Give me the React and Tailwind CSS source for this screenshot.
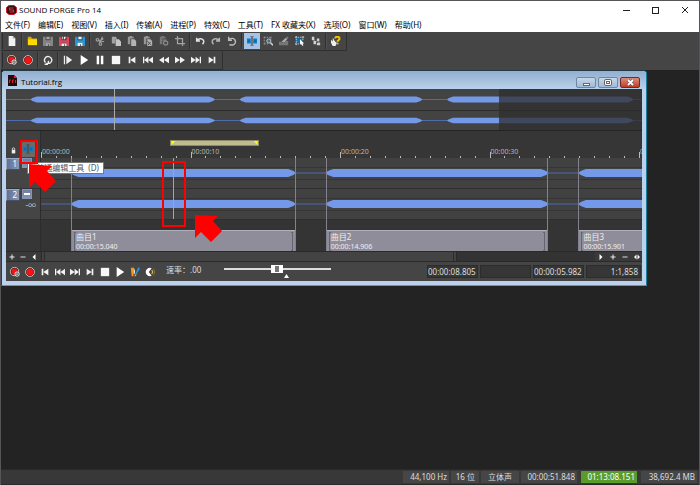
import React from 'react';

const VIEW_SECONDS = 40.2;
const TOTAL_SECONDS = 51.848;
const CURSOR = 8.805;
const SELECTION = { start: 8.6, length: 5.982 };

const regions = [
    { name: '曲目1', start: 2, length: 15.04, label: '00:00:15.040' },
    { name: '曲目2', start: 19.04, length: 14.906, label: '00:00:14.906' },
    { name: '曲目3', start: 35.95, length: 15.2, label: '00:00:15.901' },
];

const menus = ['文件(F)', '编辑(E)', '视图(V)', '插入(I)', '传输(A)', '进程(P)', '特效(C)', '工具(T)', 'FX 收藏夹(X)', '选项(O)', '窗口(W)', '帮助(H)'];

const viewPct = (s) => `${(s / VIEW_SECONDS) * 100}%`;
const totalPct = (s) => `${(s / TOTAL_SECONDS) * 100}%`;

const clipboard = <path d="M1 1h2V0h3v1h2v2H4v7H1z" />;

// All glyphs are drawn on a 12 x 12 grid
const glyphs = {
    new: <><path fill="#f2f2f2" d="M2 0h5l3 3v9H2z" /><path fill="#a8a8a8" d="M7 0v3h3z" /></>,
    open: <><path fill="#d8a900" d="M1 1h4l1 2h6v2H1z" /><path fill="#ffd900" d="M1 4h11v7H1z" /></>,
    save: <><path fill="#858585" d="M0 1h3v4h6V1h3v11H9V8H3v4H0z" /><path fill="#a2a2a2" d="M3 8h6v4H7v-2H6v2H3zM4 1h4v3H4z" /></>,
    saveAs: <><path fill="#e0455a" d="M0 1h3v4h6V1h3v11H9V8H3v4H0z" /><path fill="#eee" d="M3 9h6v3H7v-2H6v2H3zM4 1h1v3H4zM6 1h2v1l-1 2H6z" /></>,
    saveAll: <><path fill="#2496dc" d="M0 1h3v4h6V1h3v11H9V8H3v4H0z" /><path fill="#eee" d="M3 8h6v4H7v-2H6v2H3zM4 1h4v3H4z" /></>,
    cut: (
        <g fill="none" stroke="#a2a2a2" strokeWidth="1.3">
            <circle cx="3" cy="4.5" r="1.6" /><circle cx="6.5" cy="9.5" r="1.6" />
            <path d="M4 5.5 11 7M5.5 8 9 1M10 3 5 7" />
        </g>
    ),
    copy: <><path fill="#a2a2a2" d="M1 1h5l1 2v1H5v5H1z" /><path fill="#c4c4c4" d="M5.500 4h4L12 6.500V12H5.500z" /></>,
    paste: <g fill="#969696">{clipboard}<path fill="#b4b4b4" d="M5 4h4l2 2v6H5z" /></g>,
    pasteMix: <g fill="#969696">{clipboard}<path fill="#b4b4b4" d="M5 4h4l2 2v6H5z" /><path stroke="#454545" fill="none" d="m5 6 5 5M9 7l-3 4" /></g>,
    pasteNew: <g fill="#777">{clipboard}<path d="M4 4h5v2H4z" /><circle cx="8" cy="8.500" r="2.500" fill="none" stroke="#8a8a8a" strokeWidth="1.500" /></g>,
    trim: <path fill="none" stroke="#a2a2a2" strokeWidth="1.500" d="M3 0v9h9M0 3h9v9" />,
    undo: <path fill="none" stroke="#e4e4e4" strokeWidth="1.800" d="M2 2v4h4M2 6c2-3 6-4 8-1 1 2 0 4-1 5" />,
    redo: <path fill="none" stroke="#b4b4b4" strokeWidth="1.800" d="M10 2v4H6M10 6C8 3 4 2 2 5c-1 2 0 4 1 5" />,
    repeat: <path fill="none" stroke="#bcbcbc" strokeWidth="1.700" d="M2 1v4h4M2 5c2-3 7-3 8 1 1 4-4 6-7 4" />,
    edit: (
        <>
            <path fill="#0a7cc8" d="M0 3h4.500v6H0zM7.500 3H12v6H7.500z" />
            <path fill="#14608f" d="M1.500 5h2v2h-2zM8.500 5h2v2h-2z" />
            <path fill="none" stroke="#444" strokeWidth=".8" d="M4 .5h1.300v11H4M8 .5H6.700v11H8" />
        </>
    ),
    magnify: (
        <>
            <path fill="none" stroke="#bbb" strokeDasharray="1 1" d="M1 1.500h9M1.500 1v9M1 9.500h5M9.500 1v3" />
            <circle cx="7" cy="6" r="2.500" fill="#3e6f92" stroke="#d6d6d6" /><path stroke="#ddd" strokeWidth="1.600" d="m9 8 3 3" />
        </>
    ),
    pencil: <><path fill="#777" d="M0 7h3v4H0zM3 8h3v3H3zM8 6h3v5H6V9z" /><path fill="#a8a8a8" d="m3 7 5-5 2 2-4 4z" /><path fill="#888" d="M9 1h2v2H9z" /></>,
    event: (
        <>
            <path fill="#0873b9" d="M1 3h8v5H1z" />
            <path fill="none" stroke="#ddd" strokeDasharray="2 1" d="M0 1.500h11M0 9.500h8M1.500 0v11M9.500 0v5" />
            <path fill="#fff" d="m6 4 5 5H9l1 2-1 1-2-3-1 1z" />
        </>
    ),
    envelope: (
        <>
            <path fill="none" stroke="#aaa" d="m3 3 2 5M5 8l4-3M9 5l1 5" />
            <path fill="#d0d0d0" d="M1 1h3v4H1zM3 6h3v4H3zM7 3h3v3H7zM7 8h4v3H7z" />
        </>
    ),
    help: (
        <>
            <path fill="none" stroke="#f1c400" strokeWidth="2.400" d="M5 3c0-3 6-3 5 1L8 6v1" /><path fill="#f1c400" d="M7 8h2v2H7z" />
            <path fill="#eee" d="M0 5h1l1 2V3h1l1 3 1-1v2l2 1-1 3-1 1H2L0 8z" />
        </>
    ),
    armRecord: (
        <>
            <circle cx="5.500" cy="5.500" r="4.900" fill="#3a1515" stroke="#ddd" /><circle cx="5.500" cy="5.500" r="3.700" fill="#f81313" />
            <circle cx="8.500" cy="8.500" r="2.600" fill="#454545" stroke="#fff" /><path stroke="#fff" d="M7 8.500h3" />
        </>
    ),
    record: <><circle cx="6" cy="6" r="5.300" fill="#3a1515" stroke="#ddd" /><circle cx="6" cy="6" r="4.200" fill="#f81313" /></>,
    loop: <path fill="none" stroke="#eee" strokeWidth="1.700" d="M3 9C0 6 3 1 7 2s5 6 1 8H4M6.500 7v3.500M2 11h4" />,
    playAll: <path fill="#eee" d="M1 1h1.500v10H1zM4 1l7 5-7 5z" />,
    play: <path fill="#fff" d="m2 0 9 6-9 6z" />,
    pause: <path fill="#fff" d="M2 1h3v10H2zM7 1h3v10H7z" />,
    stop: <path fill="#f6f6f6" d="M1 1h10v10H1z" />,
    toStart: <path fill="#f2f2f2" d="M2 2h2v8H2zM10 2v8L4 6z" />,
    prev: <path fill="#f2f2f2" d="M0 2h1.500v8H0zM6.500 2v8l-5-4zM12 2v8L6.500 6z" />,
    rewind: <path fill="#f2f2f2" d="M6 2v8L0 6zM12 2v8L6 6z" />,
    forward: <path fill="#f2f2f2" d="M0 2v8l6-4zM6 2v8l6-4z" />,
    next: <path fill="#f2f2f2" d="M10.500 2H12v8h-1.500zM5.500 2v8l5-4zM0 2v8l5.500-4z" />,
    toEnd: <path fill="#f2f2f2" d="M8 2h2v8H8zM2 2v8l6-4z" />,
    brush: <><path fill="#f59a1b" d="M1 1h4v4l-1 6H2z" /><path fill="#fff" d="M5 3h1v5H5z" /><path fill="#2596e0" d="m10 0 2 2-4 6-2 1z" /><path fill="#f59a1b" d="m6 9 2-1-1 3H5z" /></>,
    scrub: <><path fill="#fff" d="M8 1.500A5 5 0 1 0 8 10.500L4.500 6z" /><path fill="none" stroke="#e2bd3c" strokeWidth="1.500" d="M8 4c1.500 1 1.500 3 0 4" /><path fill="none" stroke="#8d7a3c" d="M10 2c2 2 2 6 0 8" /></>,
    lock: <><path fill="#eee" d="M3 5h6v6H3z" /><path fill="none" stroke="#eee" strokeWidth="1.500" d="M4 5V3c0-2 4-2 4 0v2" /></>,
    plus: <path fill="#eee" d="M5 1h2v4h4v2H7v4H5V7H1V5h4z" />,
    minus: <path fill="#ddd" d="M1 5h10v2H1z" />,
    left: <path fill="#fff" d="M9 0v12L3 6z" />,
    right: <path fill="#fff" d="M3 0v12l6-6z" />,
    both: <path fill="#fff" d="M5 1v10L0 6zM7 1v10l5-5z" />,
};

const Icon = ({ name, className = 'h-2.5 w-2.5' }) => (
    <svg viewBox="0 0 12 12" className={`shrink-0 ${className}`} aria-hidden="true">{glyphs[name]}</svg>
);

const ToolButton = ({ name, active }) => (
    <button
        aria-label={name}
        className={`flex h-4 w-4 shrink-0 items-center justify-center ${active ? 'bg-[#a5c3e6]' : ''}`}
    >
        <Icon name={name} />
    </button>
);

const Divider = () => <span className="mx-px h-4 w-0.5 shrink-0 border-l border-[#2f2f2f] bg-[#505050]" />;

const Toolbar = ({ groups, active, label }) => (
    <div role="toolbar" aria-label={label} className="flex h-[19px] w-fit items-center border-r border-b border-[#303030] pr-0.5">
        <span className="ml-px mr-px h-4 w-px bg-[#2c2c2c]" />
        {groups.map((group, i) => (
            <React.Fragment key={group[0]}>
                {i > 0 && <Divider />}
                {group.map((name) => <ToolButton key={name} name={name} active={name === active} />)}
            </React.Fragment>
        ))}
    </div>
);

// Waveform as tapered blue blocks joined by the silence line
const Wave = ({ seconds, thickness: t }) => (
    <svg
        viewBox={`0 0 ${seconds * 100} 20`}
        preserveAspectRatio="none"
        className="absolute inset-x-0 top-0 h-full w-full"
        aria-hidden="true"
    >
        <path d={`M0 10H${seconds * 100}`} stroke="#4d6ca8" strokeWidth="1" vectorEffect="non-scaling-stroke" />
        {regions.map(({ start, length }) => {
            const a = start * 100;
            const b = (start + length) * 100;
            return (
                <path
                    key={start}
                    fill="#7499e8"
                    d={`M${a} 10L${a + 15} ${10 - t * 0.5}L${a + 50} ${10 - t}H${b - 50}L${b - 15} ${10 - t * 0.5}L${b} 10L${b - 15} ${10 + t * 0.5}L${b - 50} ${10 + t}H${a + 50}L${a + 15} ${10 + t * 0.5}Z`}
                />
            );
        })}
    </svg>
);

const Overview = () => (
    <div className="relative border-b border-[#242424] bg-[#434343]">
        <div className="relative h-[22px] border-b border-[#2b2b2b]"><Wave seconds={TOTAL_SECONDS} thickness={2.8} /></div>
        <div className="relative h-[19px]"><Wave seconds={TOTAL_SECONDS} thickness={2.8} /></div>
        <div className="absolute inset-y-0 right-0 bg-[#2d2d2d]/75" style={{ left: totalPct(VIEW_SECONDS) }} />
        <div className="absolute inset-y-0 w-px bg-[#aaa]" style={{ left: totalPct(CURSOR) }} />
    </div>
);

const Ruler = () => (
    <div className="relative h-[27px] flex-1 overflow-hidden bg-[#363636] text-[7px] leading-none text-[#b5b5b5]">
        <div
            className="absolute top-[9px] flex h-[6px] justify-between border border-[#8d8a68] bg-[#bfbb91]"
            style={{ left: viewPct(SELECTION.start), width: viewPct(SELECTION.length) }}
        >
            <svg viewBox="0 0 5 5" className="h-full w-[5px]"><path fill="#ff0" d="M0 0h5L0 5z" /></svg>
            <svg viewBox="0 0 5 5" className="h-full w-[5px]"><path fill="#ff0" d="M0 0h5v5z" /></svg>
        </div>
        {Array.from({ length: 41 }, (_, s) => (
            <span
                key={s}
                className={`absolute bottom-0 w-px bg-[#bbb] ${s % 10 === 0 ? 'h-[6px]' : 'h-0.5'}`}
                style={{ left: viewPct(s) }}
            />
        ))}
        {[0, 10, 20, 30, 40].map((s) => (
            <span key={s} className="absolute bottom-[3px] pl-px" style={{ left: viewPct(s) }}>
                {`00:00:${String(s).padStart(2, '0')}`}
            </span>
        ))}
    </div>
);

const TrackHead = ({ number, gain }) => (
    <div className="h-[31px] border-b border-[#333] bg-[#454545]">
        <div className="flex items-start gap-0.5">
            <span className="h-3 w-3.5 border border-[#9aa8c8] border-r-[#46506a] border-b-[#46506a] bg-linear-to-r from-[#5f7098] to-[#8b98b5] pr-0.5 text-right text-[8px] leading-[10px] text-white">
                {number}
            </span>
            <button aria-label={`track ${number}`} className="h-2.5 w-2.5 border border-[#8795b5] bg-linear-to-b from-[#6e7da1] to-[#8593b3] p-px">
                <span className="block h-0.5 bg-white" />
            </button>
        </div>
        <p className="pr-1 text-right text-[8px] leading-[8px] text-[#c8c8c8]">{gain}</p>
    </div>
);

const Track = () => (
    <div className="relative h-[31px] border-b border-[#2f2f2f] bg-[#414141]">
        <div className="absolute inset-x-0 top-[9px] h-[13px] border-y border-[#353535]" />
        <Wave seconds={VIEW_SECONDS} thickness={2.7} />
    </div>
);

const Timeline = () => (
    <div className="flex">
        <div className="w-[35px] shrink-0 border-r border-[#2c2c2c] bg-[#363636]">
            <TrackHead number={1} />
            <TrackHead number={2} gain="-∞" />
        </div>
        <div className="relative min-w-0 flex-1 overflow-hidden bg-[#343434]">
            <Track />
            <Track />
            <div className="h-[31px]" />
            {regions.map(({ name, start, length, label }) => (
                <div
                    key={name}
                    className="absolute inset-y-0 flex items-end border-x border-[#83818e]"
                    style={{ left: viewPct(start), width: viewPct(length) }}
                >
                    <div className="flex h-[21px] w-full justify-between border-t border-[#b0aeb8] bg-[#908d9b] px-0.5 pt-px text-[#eee]">
                        <span className="w-0.5 border-y border-l border-[#66646f]" />
                        <span className="flex-1">
                            <span className="block text-[8px] leading-[10px]">{name}</span>
                            <span className="block text-[7px] leading-[10px]">{label}</span>
                        </span>
                        <span className="w-0.5 border-y border-r border-[#66646f]" />
                    </div>
                </div>
            ))}
            <div className="absolute top-0 h-[61px] w-px bg-[#a5a5a5]" style={{ left: viewPct(CURSOR) }} />
        </div>
    </div>
);

const ScrollRow = () => (
    <div className="flex h-[11px] items-center border-y border-[#2a2a2a] bg-[#3a3a3a]">
        {['plus', 'minus', 'left'].map((n) => (
            <button key={n} aria-label={n} className="flex w-[11px] justify-center"><Icon name={n} className="h-1.5 w-1.5" /></button>
        ))}
        <div className="ml-0.5 h-full flex-1 bg-[#333]">
            <div className="flex h-full w-3/4 justify-between border-x border-[#2a2a2a] bg-[#434343] px-0.5">
                <span className="w-px bg-[#2c2c2c]" />
                <span className="w-px bg-[#2c2c2c]" />
            </div>
        </div>
        <div className="flex gap-px">
            {['right', 'plus', 'minus', 'both'].map((n) => (
                <button key={n} aria-label={n} className="flex w-[11px] justify-center"><Icon name={n} className="h-1.5 w-1.5" /></button>
            ))}
        </div>
    </div>
);

const Field = ({ children, className = '' }) => (
    <span className={`h-[13px] border border-[#2c2c2c] bg-[#363636] pr-0.5 text-right text-[8px] leading-[11px] text-[#ddd] ${className}`}>
        {children}
    </span>
);

const Transport = () => (
    <div className="flex h-[19px] items-center bg-[#454545] pr-px">
        <div className="flex pl-px">
            {['armRecord', 'record', 'toStart', 'prev', 'next', 'toEnd', 'stop', 'play', 'brush', 'scrub'].map((n) => (
                <button key={n} aria-label={n} className="flex w-[15px] justify-center"><Icon name={n} /></button>
            ))}
        </div>
        <label htmlFor="rate" className="ml-[9px] w-[58px] pb-1 text-[8px] leading-3 text-[#ddd]">速率：.00</label>
        <div className="flex h-full w-[107px] flex-col items-center pt-0.5">
            <input
                id="rate"
                type="range"
                defaultValue="49"
                className="h-[10px] w-full appearance-none bg-transparent [&::-webkit-slider-runnable-track]:h-0.5 [&::-webkit-slider-runnable-track]:bg-[#ddd] [&::-webkit-slider-thumb]:-mt-[3px] [&::-webkit-slider-thumb]:h-2 [&::-webkit-slider-thumb]:w-3 [&::-webkit-slider-thumb]:appearance-none [&::-webkit-slider-thumb]:border-x-4 [&::-webkit-slider-thumb]:border-y [&::-webkit-slider-thumb]:border-white [&::-webkit-slider-thumb]:bg-[#777]"
            />
            <svg viewBox="0 0 5 4" className="ml-[18px] h-1 w-[5px]"><path fill="#fff" d="M2.500 0 5 4H0z" /></svg>
        </div>
        <div className="ml-auto flex gap-0.5">
            <Field className="w-[51px]">00:00:08.805</Field>
            <Field className="w-[51px]" />
            <Field className="w-[51px]">00:00:05.982</Field>
            <Field className="w-[55px]">1:1,858</Field>
        </div>
    </div>
);

const Annotations = () => (
    <>
        <div className="absolute left-[25px] top-[91px] flex h-3 w-[77px] items-center justify-end border border-[#777] bg-white pr-1 text-[8px] leading-none text-[#555]">
            <span role="tooltip">普通编辑工具&nbsp; (D)</span>
        </div>
        <div className="absolute left-[18px] top-[69px] h-6 w-[18px] border-2 border-[#f00]" />
        <div className="absolute left-[160px] top-[90px] h-[66px] w-6 border-2 border-[#f00]" />
        <svg viewBox="0 0 28 28" className="absolute left-[27px] top-[93px] h-7 w-7"><path fill="#f00" d="M0 0 23 2 18 7 27 17 16 28 6 18 0 24z" /></svg>
        <svg viewBox="0 0 28 28" className="absolute left-[193px] top-36 h-7 w-7"><path fill="#f00" d="M0 0 23 1 18 6 27 16 16 27 6 17 0 23z" /></svg>
    </>
);

const DocumentWindow = () => (
    <section className="relative mr-[52px] rounded-t border border-[#243b48] border-b-[#16b7d4] border-r-[#167f99] bg-[#bcd2ec] px-1 pb-1">
        <header className="-mx-1 flex h-[18px] items-center rounded-t bg-linear-to-b from-[#93afcf] to-[#b8d1ec] pl-1.5 pr-1.5">
            <svg viewBox="0 0 9 11" className="h-[11px] w-[9px]">
                <path fill="#25090c" d="M0 0h6l3 3v8H0z" />
                <path fill="none" stroke="#e0202c" d="M1.500 8V5H3M4.500 8V5H6M7.500 5v3" /><path fill="#e0202c" d="M6 0v3h3z" />
            </svg>
            <h2 className="ml-1 mt-1 font-['Open_Sans','Noto_Sans',sans-serif] text-[8px] leading-none text-black">Tutorial.frg</h2>
            <div className="ml-auto mt-1 flex gap-0.5">
                <button aria-label="minimize" className="flex h-[11px] w-5 items-center justify-center rounded-xs border border-[#7087a3] bg-linear-to-b from-[#c6d7e9] to-[#a0bad6]">
                    <span className="mt-1 h-[3px] w-[7px] border border-[#666] bg-white" />
                </button>
                <button aria-label="restore" className="flex h-[11px] w-5 items-center justify-center rounded-xs border border-[#7087a3] bg-linear-to-b from-[#c6d7e9] to-[#a0bad6]">
                    <span className="h-[7px] w-2 rounded-xs border border-[#666] bg-white p-px"><span className="block h-[3px] border border-[#667]" /></span>
                </button>
                <button aria-label="close" className="flex h-[11px] w-5 items-center justify-center rounded-xs border border-[#6d2a2a] bg-linear-to-b from-[#d88b7d] to-[#c23b22]">
                    <svg viewBox="0 0 7 7" className="h-[7px] w-[7px]"><path stroke="#555" strokeWidth="3" d="m1 1 5 5M6 1 1 6" /><path stroke="#fff" strokeWidth="1.800" d="m1 1 5 5M6 1 1 6" /></svg>
                </button>
            </div>
        </header>
        <Overview />
        <div className="flex">
            <div className="flex w-[35px] shrink-0 items-end justify-between border-r border-[#2c2c2c] bg-[#404040] pl-1 pr-1">
                <Icon name="lock" className="mb-1 h-[7px] w-[7px]" />
                <button aria-label="edit tool" className="mb-px mr-px flex h-4 w-[14px] items-center justify-center bg-[#6a6a6a]">
                    <Icon name="edit" />
                </button>
            </div>
            <Ruler />
        </div>
        <Timeline />
        <ScrollRow />
        <Transport />
        <Annotations />
    </section>
);

const StatusBar = () => (
    <footer className="flex h-4 items-center justify-end gap-0.5 border-y border-[#2a2a2a] bg-[#383838] pr-0.5 text-right text-[8px] leading-3 text-[#ddd]">
        <span className="w-[46px] bg-[#464646] pr-0.5">44,100 Hz</span>
        <span className="w-7 bg-[#464646] pr-1">16 位</span>
        <span className="w-[38px] bg-[#464646] text-center">立体声</span>
        <span className="w-14 bg-[#464646] pr-0.5">00:00:51.848</span>
        <span className="mx-0.5 w-14 bg-[#5a9c2c] pr-0.5 text-white">01:13:08.151</span>
        <span className="w-14 bg-[#464646] pr-0.5">38,692.4 MB</span>
    </footer>
);

const App = () => {
    const captionButton = 'flex h-[18px] w-[29px] items-center justify-center';

    return (
        <div className="flex min-h-screen flex-col border-x border-t border-[#55565a] bg-[#232323] font-['Noto_Sans','Noto_Sans_CJK_SC',sans-serif]">
            <header className="bg-white text-black">
                <div className="flex h-[18px] items-center pl-[5px]">
                    <svg viewBox="0 0 11 10" className="h-2.5 w-[11px]">
                        <path fill="#241013" stroke="#d3182b" d="M3 .5h5l2.500 2v5l-2.500 2H3l-2.500-2v-5z" />
                        <path fill="none" stroke="#ee2a3a" strokeWidth="1.200" d="M7.500 3h-4v2h4v2h-4" />
                    </svg>
                    <h1 className="ml-0.5 font-['Open_Sans','Noto_Sans',sans-serif] text-[8px] leading-none">SOUND FORGE Pro 14</h1>
                    <div className="ml-auto flex">
                        <button aria-label="Minimize" className={captionButton}><span className="h-px w-[7px] bg-[#222]" /></button>
                        <button aria-label="Maximize" className={captionButton}><span className="h-[7px] w-[7px] border border-[#222]" /></button>
                        <button aria-label="Close" className={captionButton}>
                            <svg viewBox="0 0 8 8" className="h-2 w-2"><path stroke="#222" d="m1 1 6 6M7 1 1 7" /></svg>
                        </button>
                    </div>
                </div>
                <nav className="flex h-[13px] gap-2 whitespace-nowrap pl-1 text-[8px] leading-[10px]">
                    {menus.map((m) => <button key={m} className="h-3">{m}</button>)}
                </nav>
            </header>

            <div className="bg-[#454545]">
                <Toolbar
                    label="standard"
                    active="edit"
                    groups={[
                        ['new'],
                        ['open', 'save', 'saveAs', 'saveAll'],
                        ['cut', 'copy', 'paste', 'pasteMix', 'pasteNew', 'trim'],
                        ['undo', 'redo', 'repeat'],
                        ['edit', 'magnify', 'pencil', 'event', 'envelope'],
                        ['help'],
                    ]}
                />
                <Toolbar
                    label="transport"
                    groups={[
                        ['armRecord', 'record'],
                        ['loop'],
                        ['playAll', 'play', 'pause', 'stop', 'toStart', 'prev', 'rewind', 'forward', 'next', 'toEnd'],
                    ]}
                />
            </div>

            <main className="flex-1">
                <DocumentWindow />
            </main>
            <StatusBar />
        </div>
    );
};

export default App;
